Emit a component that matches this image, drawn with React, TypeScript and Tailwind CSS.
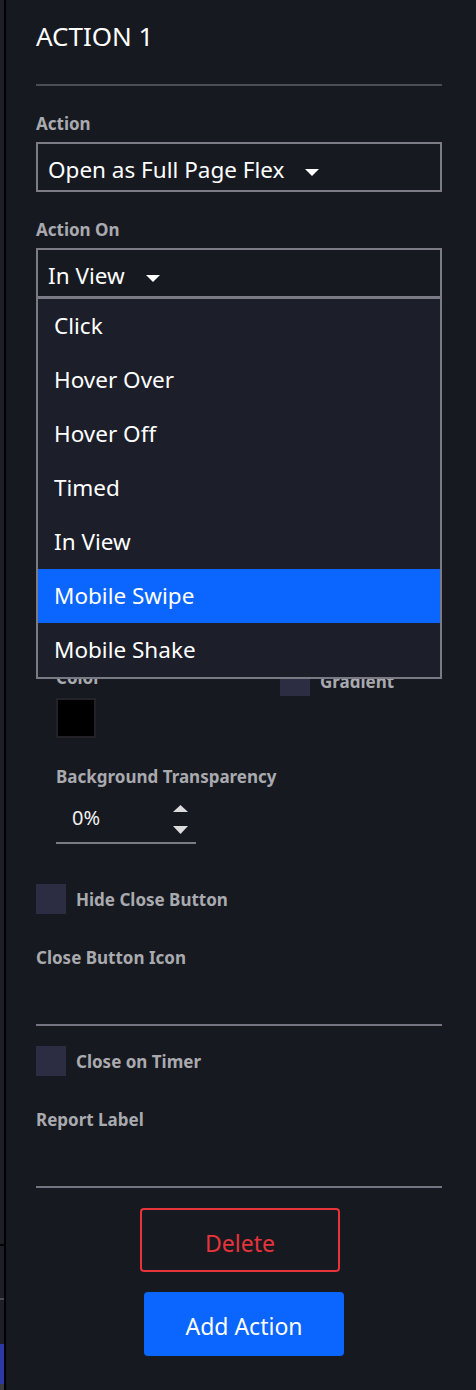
import React from "react";

const labelCls = "text-[17px] leading-[22px] font-bold text-[#a9aaae]";

function Caret() {
  return (
    <svg width="14" height="7" viewBox="0 0 14 7" className="mt-[14px] ml-[21px] shrink-0">
      <polygon points="0,0 14,0 7,7" fill="#ffffff" />
    </svg>
  );
}

function Select({ value }: { value: string }) {
  return (
    <div className="h-[50px] border-2 border-[#7b7c86] pl-[10px] pt-[11px]">
      <div className="flex items-start">
        <span className="text-[22.5px] leading-[30px] text-white whitespace-nowrap">{value}</span>
        <Caret />
      </div>
    </div>
  );
}

const options = ["Click", "Hover Over", "Hover Off", "Timed", "In View", "Mobile Swipe", "Mobile Shake"];

function Checkbox() {
  return <div className="w-[30px] h-[30px] shrink-0 bg-[#2c2d42]" />;
}

export default function App() {
  return (
    <div className="flex h-[1390px] w-[476px] overflow-hidden bg-[#171921] font-['Noto_Sans',sans-serif]">
      <div className="flex w-[4px] shrink-0 flex-col bg-[#1d1f27]">
        <div className="h-[1244px] shrink-0" />
        <div className="h-[2px] shrink-0 bg-black" />
        <div className="h-[52px] shrink-0" />
        <div className="h-[2px] shrink-0 bg-[#4a4b53]" />
        <div className="h-[44px] shrink-0" />
        <div className="h-[40px] shrink-0 bg-[#2b3aa6]" />
        <div className="flex-1 bg-[#3a3b40]" />
      </div>
      <div className="w-[2px] shrink-0 bg-black" />
      <div className="flex-1 pl-[30px] pr-[34px] pt-[20px]">
        <h1 className="text-[26px] leading-[32px] text-white">ACTION 1</h1>
        <div className="mt-[32px] h-[2px] bg-[#4a4c56]" />

        <div className={labelCls + " mt-[27px] mb-[-1px]"}>Action</div>
        <div className="mt-[8px]">
          <Select value="Open as Full Page Flex" />
        </div>

        <div className={labelCls + " mt-[27px] mb-[-1px]"}>Action On</div>
        <div className="relative mt-[8px]">
          <Select value="In View" />
          <div className="absolute left-0 right-0 top-[49px] z-10 border-2 border-[#797a84] bg-[#1c1e29]">
            {options.map((o) => (
              <div
                key={o}
                className={
                  "h-[54px] pl-[16px] text-[22.5px] leading-[54px] text-white " +
                  (o === "Mobile Swipe" ? "bg-[#0a66ff]" : "")
                }
              >
                {o}
              </div>
            ))}
          </div>
        </div>

        <div className="mt-[368px] pl-[20px]">
          <div className="flex">
            <div className="w-[224px] shrink-0">
              <div className={labelCls + " mt-[1px]"}>Color</div>
              <div className="mt-[9px] h-[40px] w-[40px] border-2 border-[#222228] bg-black" />
            </div>
            <div className="flex h-[30px] items-center gap-[10px]">
              <Checkbox />
              <span className={labelCls + " pt-[1px]"}>Gradient</span>
            </div>
          </div>

          <div className={labelCls + " mt-[28px] mb-[-1px]"}>Background Transparency</div>
          <div className="mt-[10px] flex h-[47px] w-[140px] border-b-2 border-[#7b7c86]">
            <span className="pl-[16px] pt-[7px] text-[20px] leading-[28px] text-[#f0f0f0]">0%</span>
            <div className="ml-auto mr-[8px] flex flex-col pt-[8px]">
              <svg width="15" height="7" viewBox="0 0 15 7">
                <polygon points="0,7 15,7 7.5,0" fill="#dcdcdc" />
              </svg>
              <svg width="15" height="8" viewBox="0 0 15 8" className="mt-[14px]">
                <polygon points="0,0 15,0 7.5,8" fill="#dcdcdc" />
              </svg>
            </div>
          </div>
        </div>

        <div className="mt-[40px] flex items-center gap-[10px]">
          <Checkbox />
          <span className={labelCls + " pt-[1px]"}>Hide Close Button</span>
        </div>

        <div className={labelCls + " mt-[33px] mb-[-1px]"}>Close Button Icon</div>
        <div className="h-[58px] border-b-2 border-[#737480]" />

        <div className="mt-[20px] flex items-center gap-[10px]">
          <Checkbox />
          <span className={labelCls + " pt-[1px]"}>Close on Timer</span>
        </div>

        <div className={labelCls + " mt-[33px] mb-[-1px]"}>Report Label</div>
        <div className="h-[58px] border-b-2 border-[#737480]" />

        <div className="flex flex-col items-center">
          <button className="ml-[2px] mt-[20px] flex h-[64px] w-[200px] items-center justify-center rounded-[4px] border-2 border-[#e5343a] pt-[6px] text-[23px] leading-[30px] text-[#e5343a]">
            Delete
          </button>
          <button className="ml-[10px] mt-[20px] flex h-[64px] w-[200px] items-center justify-center rounded-[4px] bg-[#0a66ff] pt-[4px] text-[23px] leading-[30px] text-white">
            Add Action
          </button>
        </div>
      </div>
    </div>
  );
}
